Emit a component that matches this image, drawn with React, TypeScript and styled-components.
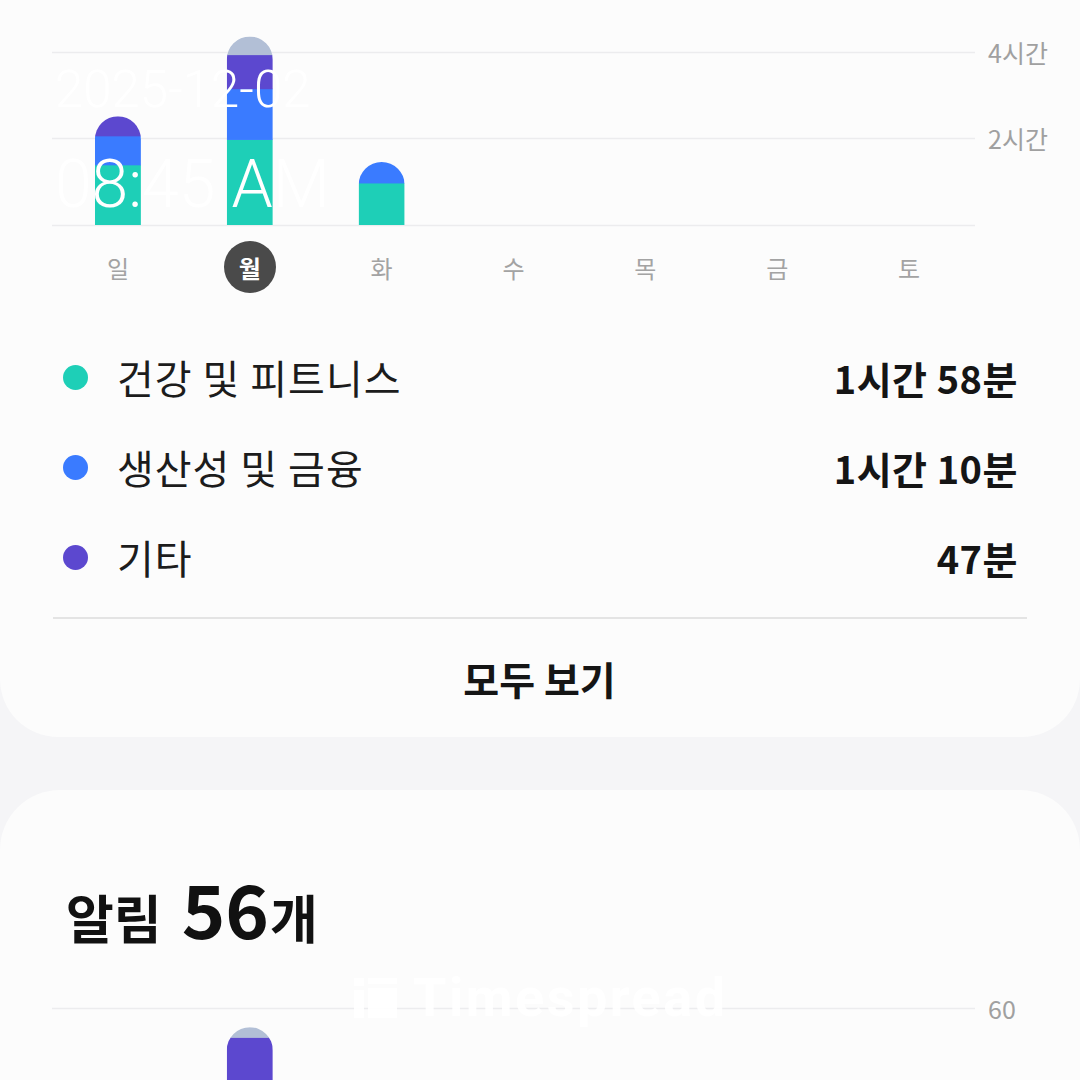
import React from "react";
import styled, { createGlobalStyle } from "styled-components";

const GlobalStyle = createGlobalStyle`
  html, body { margin: 0; padding: 0; background: #f5f5f7; }
  body { font-family: "Noto Sans CJK KR", "Noto Sans", sans-serif; }
  * { box-sizing: border-box; }
`;

const COLORS = {
  health: "#1ecfb7",
  work: "#3a7bff",
  other: "#5c48cf",
  rest: "#b2bfd6",
};

const SCALE = 87 / 120; // px per minute
const COL_W = 923 / 7;
const BAR_W = 46;

type Seg = { color: string; minutes: number };

const week: { day: string; segs: Seg[]; active?: boolean }[] = [
  { day: "일", segs: [{ color: COLORS.health, minutes: 83 }, { color: COLORS.work, minutes: 40 }, { color: COLORS.other, minutes: 27 }] },
  {
    day: "월",
    active: true,
    segs: [
      { color: COLORS.health, minutes: 118 },
      { color: COLORS.work, minutes: 70 },
      { color: COLORS.other, minutes: 47 },
      { color: COLORS.rest, minutes: 25 },
    ],
  },
  { day: "화", segs: [{ color: COLORS.health, minutes: 58 }, { color: COLORS.work, minutes: 29 }] },
  { day: "수", segs: [] },
  { day: "목", segs: [] },
  { day: "금", segs: [] },
  { day: "토", segs: [] },
];

const legend = [
  { label: "건강 및 피트니스", value: "1시간 58분", color: COLORS.health },
  { label: "생산성 및 금융", value: "1시간 10분", color: COLORS.work },
  { label: "기타", value: "47분", color: COLORS.other },
];

const Screen = styled.div`
  width: 1080px;
  height: 1080px;
  overflow: hidden;
  position: relative;
  background: #f5f5f7;
  display: flex;
  flex-direction: column;
  gap: 53px;
`;

const UsageCard = styled.section`
  background: #fcfcfc;
  border-radius: 0 0 58px 58px;
  padding: 0 53px 0 52px;
  display: flex;
  flex-direction: column;
`;

const ChartRow = styled.div`
  display: grid;
  grid-template-columns: 923px 1fr;
`;

const ChartSvg = styled.svg`
  display: block;
`;

const Axis = styled.div<{ $top: number }>`
  display: flex;
  flex-direction: column;
  gap: 56px;
  padding: ${(p) => p.$top}px 0 0 13px;
`;

const AxisLabel = styled.span`
  font-size: 25px;
  line-height: 30px;
  color: #a0a0a0;
  white-space: nowrap;
`;

const DayRow = styled.div`
  display: grid;
  grid-template-columns: repeat(7, 1fr);
  width: 923px;
  margin-top: 14px;
`;

const DayCell = styled.div`
  height: 52px;
  display: flex;
  align-items: center;
  justify-content: center;
`;

const DayLabel = styled.span<{ $active?: boolean }>`
  width: 52px;
  height: 52px;
  border-radius: 50%;
  display: flex;
  align-items: center;
  justify-content: center;
  font-size: 24px;
  font-weight: ${(p) => (p.$active ? 700 : 400)};
  color: ${(p) => (p.$active ? "#ffffff" : "#a3a3a3")};
  background: ${(p) => (p.$active ? "#4a4a4a" : "transparent")};
`;

const Legend = styled.ul`
  list-style: none;
  margin: 39px 0 0;
  padding: 0;
`;

const LegendRow = styled.li`
  height: 90px;
  display: flex;
  align-items: center;
  padding: 0 9px 0 11px;
`;

const Dot = styled.span<{ $color: string }>`
  width: 25px;
  height: 25px;
  border-radius: 50%;
  background: ${(p) => p.$color};
  margin-right: 29px;
  flex: none;
`;

const LegendLabel = styled.span`
  font-size: 40px;
  letter-spacing: 1px;
  color: #1c1c1c;
`;

const LegendValue = styled.span`
  margin-left: auto;
  font-size: 38px;
  font-weight: 700;
  letter-spacing: 0.5px;
  color: #151515;
`;

const Divider = styled.hr`
  margin: 15px 0 0 1px;
  border: none;
  height: 2px;
  background: #e4e4e4;
`;

const ViewAll = styled.button`
  height: 118px;
  border: none;
  background: transparent;
  font-family: inherit;
  font-size: 39px;
  font-weight: 700;
  color: #151515;
`;

const NotifCard = styled.section`
  flex: 1;
  background: #fcfcfc;
  border-radius: 60px 60px 0 0;
  padding: 72px 53px 0 52px;
  display: flex;
  flex-direction: column;
`;

const Title = styled.h2`
  margin: 0;
  padding-left: 14px;
  display: flex;
  align-items: baseline;
  font-size: 52px;
  font-weight: 700;
  color: #111;
  line-height: 90px;
`;

const Count = styled.span`
  font-size: 74px;
  margin: 0 1px 0 20px;
`;

const Stamp = styled.div`
  position: absolute;
  left: 55px;
  font-family: Roboto, "Liberation Sans", sans-serif;
  font-weight: 300;
  color: #ffffff;
  line-height: 1;
  white-space: nowrap;
  pointer-events: none;
`;

const DateStamp = styled(Stamp)`
  top: 64px;
  font-size: 51px;
`;

const TimeStamp = styled(Stamp)`
  top: 152px;
  font-size: 66px;
`;

const Watermark = styled.div`
  position: absolute;
  left: 354px;
  top: 968px;
  display: flex;
  align-items: center;
  gap: 16px;
  color: rgba(255, 255, 255, 0.92);
  font-family: Roboto, "Liberation Sans", sans-serif;
  font-weight: 700;
  font-size: 54px;
  letter-spacing: 2.5px;
  line-height: 60px;
  pointer-events: none;
`;

function Bar({ cx, base, segs }: { cx: number; base: number; segs: Seg[] }) {
  if (!segs.length) return null;
  const total = segs.reduce((s, x) => s + x.minutes * SCALE, 0);
  const top = base - total;
  const r = BAR_W / 2;
  const id = `clip-${Math.round(cx)}-${Math.round(base)}`;
  let y = base;
  return (
    <g>
      <clipPath id={id}>
        <path d={`M${cx - r} ${base} V${top + r} A${r} ${r} 0 0 1 ${cx + r} ${top + r} V${base} Z`} />
      </clipPath>
      <g clipPath={`url(#${id})`}>
        {segs.map((s, i) => {
          const h = s.minutes * SCALE;
          y -= h;
          return <rect key={i} x={cx - r} y={y} width={BAR_W} height={h + 0.5} fill={s.color} />;
        })}
      </g>
    </g>
  );
}

export default function App() {
  return (
    <>
      <GlobalStyle />
      <Screen>
        <UsageCard>
          <ChartRow>
            <ChartSvg width={923} height={227} viewBox="0 0 923 227">
              {[52, 138, 225].map((y) => (
                <line key={y} x1={0} x2={923} y1={y + 0.5} y2={y + 0.5} stroke="#ececee" strokeWidth={1.5} />
              ))}
              {week.map((d, i) => (
                <Bar key={d.day} cx={COL_W / 2 + COL_W * i} base={225} segs={d.segs} />
              ))}
            </ChartSvg>
            <Axis $top={37}>
              <AxisLabel>4시간</AxisLabel>
              <AxisLabel>2시간</AxisLabel>
            </Axis>
          </ChartRow>
          <DayRow>
            {week.map((d) => (
              <DayCell key={d.day}>
                <DayLabel $active={d.active}>{d.day}</DayLabel>
              </DayCell>
            ))}
          </DayRow>
          <Legend>
            {legend.map((l) => (
              <LegendRow key={l.label}>
                <Dot $color={l.color} />
                <LegendLabel>{l.label}</LegendLabel>
                <LegendValue>{l.value}</LegendValue>
              </LegendRow>
            ))}
          </Legend>
          <Divider />
          <ViewAll>모두 보기</ViewAll>
        </UsageCard>

        <NotifCard>
          <Title>
            알림<Count>56</Count>개
          </Title>
          <ChartRow>
            <ChartSvg width={923} height={140} viewBox="0 0 923 140">
              <line x1={0} x2={923} y1={46.5} y2={46.5} stroke="#ececee" strokeWidth={1.5} />
              <Bar
                cx={COL_W / 2 + COL_W}
                base={200}
                segs={[
                  { color: COLORS.other, minutes: 172 },
                  { color: COLORS.rest, minutes: 14 },
                ]}
              />
            </ChartSvg>
            <Axis $top={31}>
              <AxisLabel>60</AxisLabel>
            </Axis>
          </ChartRow>
        </NotifCard>

        <DateStamp>2025-12-02</DateStamp>
        <TimeStamp>08:45 AM</TimeStamp>
        <Watermark>
          <svg width="43" height="40" viewBox="0 0 43 40" fill="currentColor">
            <rect x="0" y="0" width="10" height="8" />
            <rect x="0" y="12" width="10" height="28" />
            <rect x="14" y="0" width="29" height="6" />
            <rect x="14" y="10" width="29" height="30" />
          </svg>
          <span>Timespread</span>
        </Watermark>
      </Screen>
    </>
  );
}
